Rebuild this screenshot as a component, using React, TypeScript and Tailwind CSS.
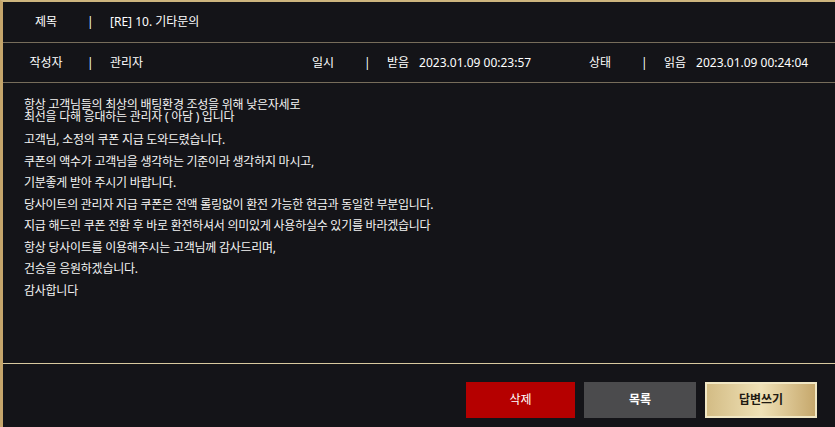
const FONT = "font-['Noto_Sans','Noto_Sans_CJK_KR',sans-serif]";

function Pipe() {
  return <span className="w-[23px] -ml-[2px] shrink-0 text-left">|</span>;
}

function Cell({ label, children }: { label: string; children: React.ReactNode }) {
  return (
    <div className="flex items-center">
      <div className="w-[86px] shrink-0 text-center">{label}</div>
      <Pipe />
      <div className="flex items-center gap-[10px]">{children}</div>
    </div>
  );
}

const lines = [
  "고객님, 소정의 쿠폰 지급 도와드렸습니다.",
  "쿠폰의 액수가 고객님을 생각하는 기준이라 생각하지 마시고,",
  "기분좋게 받아 주시기 바랍니다.",
  "당사이트의 관리자 지급 쿠폰은 전액 롤링없이 환전 가능한 현금과 동일한 부분입니다.",
  "지급 해드린 쿠폰 전환 후 바로 환전하셔서 의미있게 사용하실수 있기를 바라겠습니다",
  "항상 당사이트를 이용해주시는 고객님께 감사드리며,",
  "건승을 응원하겠습니다.",
  "감사합니다",
];

export default function App() {
  return (
    <div className={`w-[835px] h-[427px] bg-[#141418] text-white text-[12px] ${FONT} flex flex-col border-t-2 border-l-[3px] border-t-[#cdb57e] border-l-[#c5a56b] overflow-hidden`}>
      {/* 제목 */}
      <div className="h-[41px] shrink-0 flex items-center border-b border-[#776d5b]">
        <Cell label="제목">
          <span>[RE] 10. 기타문의</span>
        </Cell>
      </div>

      {/* 작성자 / 일시 / 상태 */}
      <div className="h-[40px] shrink-0 grid grid-cols-[277px_277px_1fr] items-center border-b border-[#776d5b]">
        <Cell label="작성자">
          <span>관리자</span>
        </Cell>
        <Cell label="일시">
          <span>받음</span>
          <span>2023.01.09 00:23:57</span>
        </Cell>
        <Cell label="상태">
          <span>읽음</span>
          <span>2023.01.09 00:24:04</span>
        </Cell>
      </div>

      {/* 본문 */}
      <div className="flex-1 pl-[21px] pt-[16px] text-[#f4f4f4] tracking-[-0.25px]">
        <div className="leading-[12px]">
          항상 고객님들의 최상의 배팅환경 조성을 위해 낮은자세로
          <br />
          최선을 다해 응대하는 관리자 ( 아담 ) 입니다
        </div>
        <div className="mt-[6px] leading-[21.5px]">
          {lines.map((l) => (
            <div key={l}>{l}</div>
          ))}
        </div>
      </div>

      <div className="h-px shrink-0 bg-[#d8c99f]" />

      {/* 버튼 */}
      <div className="h-[63px] shrink-0 flex justify-end items-start pt-[18px] pr-[18px] gap-[9px]">
        <button className="w-[109px] h-[36px] bg-[#b50000] text-white text-[12px]">삭제</button>
        <button className="w-[112px] h-[36px] bg-[#4b4b4d] text-white text-[12px] font-bold">목록</button>
        <button className="w-[112px] h-[36px] border-2 border-[#f1e7c4] bg-gradient-to-r from-[#d3bc85] via-[#efe1b6] to-[#c6a86c] text-[#1e1a12] text-[12px] font-bold">
          답변쓰기
        </button>
      </div>
    </div>
  );
}
